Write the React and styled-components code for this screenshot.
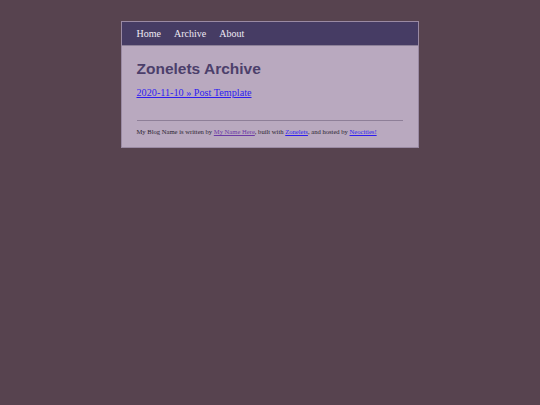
import React from "react";
import styled, { createGlobalStyle } from "styled-components";

const GlobalStyle = createGlobalStyle`
  html, body {
    margin: 0;
    padding: 0;
    background: #57434f;
  }
  body {
    font-family: "Liberation Serif", serif;
  }
`;

const Page = styled.div`
  padding-top: 21px;
  display: flex;
  justify-content: center;
`;

const Container = styled.div`
  width: 296px;
  margin-left: -1px;
  border: 1px solid #9a8aa3;
  background: #b9a9bf;
`;

const Nav = styled.nav`
  background: #463c64;
  border-bottom: 1px solid #8d8198;
  height: 23px;
  display: flex;
  align-items: center;
  gap: 13px;
  padding-left: 15px;
`;

const NavLink = styled.a`
  color: #eeeaf4;
  font-size: 10px;
  text-decoration: none;
`;

const Content = styled.main`
  padding: 14px 15px 11px 15px;
`;

const Title = styled.h1`
  margin: 0 0 9px;
  font-family: "Liberation Sans", Arial, sans-serif;
  font-size: 15.5px;
  line-height: 18px;
  font-weight: bold;
  color: #4c3f6b;
`;

const PostLink = styled.a`
  display: block;
  font-size: 10.2px;
  line-height: 12px;
  color: #2d1cf0;
  text-decoration: underline;
`;

const Rule = styled.hr`
  margin: 21px 0 6px;
  border: 0;
  border-top: 1px solid #8e7f98;
`;

const Footer = styled.footer`
  font-size: 6.6px;
  line-height: 9px;
  color: #2b2430;
`;

const FootLink = styled.a`
  color: ${(p) => (p.$visited ? "#6b3aa6" : "#2d1cf0")};
  text-decoration: underline;
`;

export default function App() {
  return (
    <>
      <GlobalStyle />
      <Page>
        <Container>
          <Nav>
            <NavLink href="#">Home</NavLink>
            <NavLink href="#">Archive</NavLink>
            <NavLink href="#">About</NavLink>
          </Nav>
          <Content>
            <Title>Zonelets Archive</Title>
            <PostLink href="#">2020-11-10 » Post Template</PostLink>
            <Rule />
            <Footer>
              My Blog Name is written by <FootLink href="#" $visited>My Name Here</FootLink>, built with{" "}
              <FootLink href="#">Zonelets</FootLink>, and hosted by <FootLink href="#">Neocities!</FootLink>
            </Footer>
          </Content>
        </Container>
      </Page>
    </>
  );
}
